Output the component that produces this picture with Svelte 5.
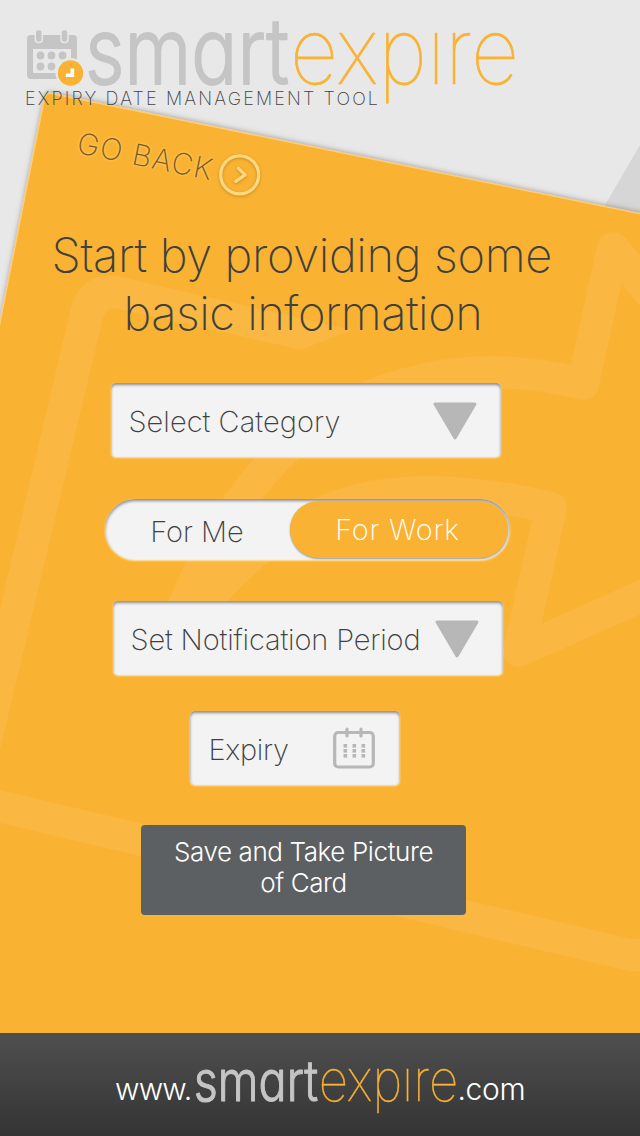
<script>
  let category = $state('Select Category');
  let period = $state('Set Notification Period');
  let audience = $state('work');
  const columns = [14, 23, 32];
  const rows = [17, 22, 27];
</script>

{#snippet wordmark()}
  <svg class="wordmark" viewBox="0 0 430 90" aria-label="smartexpire">
    <text class="smart" x="-2" y="64" textLength="204" lengthAdjust="spacingAndGlyphs">smart</text>
    <text class="expire" x="203" y="64" textLength="229" lengthAdjust="spacingAndGlyphs">expıre</text>
  </svg>
{/snippet}

{#snippet triangle()}
  <svg class="triangle" viewBox="0 0 44 38">
    <path d="M2 2H42L22 36Z" />
  </svg>
{/snippet}

<div class="page">
  <svg class="backdrop" viewBox="0 0 640 1136">
    <defs>
      <filter id="lift" x="-10%" y="-10%" width="120%" height="120%">
        <feDropShadow dx="0" dy="-1" stdDeviation="2.500" flood-color="#666" flood-opacity=".5" />
      </filter>
    </defs>
    <path d="M640 145L590 231L640 240Z" fill="#d6d6d6" />
    <path class="sheet" d="M-60 625L44.200 99Q45.500 92.500 51.500 93.500L700 226V1100H-60Z" filter="url(#lift)" />
    <g class="pattern">
      <path d="M352 330Q325 340 302 350L117 308.500Q107 307 103 318L0 750V609L72 303Q84 272 117 276Z" />
      <path d="M0 790L8 792L630 938.500Q636 940 640 938V971Q634 972 629 971L0 823Z" />
      <path class="line" d="M178 620C205 550 240 490 290 445C350 395 450 350 583 384L613 248L660 305" />
      <path class="line" d="M195 615C250 545 320 490 433 492C480 493 515 499 551 508L519 651L660 588" />
    </g>
  </svg>

  <header>
    <div class="brand">
      <svg class="mark" viewBox="0 0 58 58">
        <rect x="2" y="5" width="50" height="44" rx="4" fill="#c5c5c5" />
        <path d="M8 19H46V43H8Z" fill="#e8e8e8" />
        <g fill="#c5c5c5">
          <circle cx="15.500" cy="25.500" r="3.900" /><circle cx="26.500" cy="25.500" r="3.900" /><circle cx="37.500" cy="25.500" r="3.900" />
          <circle cx="15.500" cy="36.500" r="3.900" /><circle cx="26.500" cy="36.500" r="3.900" />
        </g>
        <g fill="#c5c5c5" stroke="#e8e8e8" stroke-width="1.500">
          <rect x="10.300" y="-.5" width="7" height="13" rx="3" /><rect x="36" y="-.5" width="7" height="13" rx="3" />
        </g>
        <circle cx="45.500" cy="43" r="15" fill="#e8e8e8" />
        <circle cx="45.500" cy="43" r="12.700" fill="#f9b233" />
        <path d="M45.500 38.500H49.200V47H40.800V43.500H45.500Z" fill="#fff" />
      </svg>
      {@render wordmark()}
    </div>
    <p class="tagline">EXPIRY DATE MANAGEMENT TOOL</p>
  </header>

  <button class="back">
    <span>GO BACK</span>
    <svg viewBox="0 0 44 44">
      <circle cx="22" cy="22" r="19" />
      <path d="M20.700 15.500L27.500 22L18 28.500" />
    </svg>
  </button>

  <main>
    <h1><span>Start by providing some</span><span class="second">basic information</span></h1>

    <button class="field category"><span>{category}</span>{@render triangle()}</button>

    <div class="switch">
      <button class:active={audience === 'me'} onclick={() => (audience = 'me')}>For Me</button>
      <button class:active={audience === 'work'} onclick={() => (audience = 'work')}>For Work</button>
    </div>

    <button class="field period"><span>{period}</span>{@render triangle()}</button>

    <button class="field expiry">
      <span>Expiry</span>
      <svg class="calendar" viewBox="0 0 42 42">
        <rect x="1.700" y="5.500" width="38.600" height="34.500" rx="3.500" />
        <path d="M14 2V9M28 2V9" />
        {#each rows as y}
          {#each columns as x}
            <rect class="day" x={x - 3.5} {y} width="3.600" height="3.600" />
          {/each}
        {/each}
      </svg>
    </button>

    <button class="save"><span>Save and Take Picture</span><span>of Card</span></button>
  </main>

  <footer>
    <span class="www">www.</span>
    {@render wordmark()}
    <span class="com">.com</span>
  </footer>
</div>

<style>
  :global(body) { margin: 0; }
  .page {
    position: relative;
    isolation: isolate;
    width: 640px;
    height: 1136px;
    overflow: hidden;
    display: flex;
    flex-direction: column;
    background: #e8e8e8;
    color: #404040;
    font-family: Inter, "Liberation Sans", sans-serif;
    font-weight: 150;
  }
  .backdrop { position: absolute; inset: 0; z-index: -1; width: 640px; height: 1136px; }
  .sheet { fill: #f9b233; stroke: #fccd7c; stroke-width: 1.5; }
  .pattern { fill: #fab741; }
  .line { fill: none; stroke: #fab741; stroke-width: 32; stroke-linejoin: round; }
  button {
    border: 0;
    padding: 0;
    background: none;
    color: inherit;
    font: inherit;
    white-space: nowrap;
  }
  header { height: 108px; padding: 20px 0 0 25px; box-sizing: border-box; }
  .brand { display: flex; height: 69px; }
  .mark { width: 58px; height: 58px; margin-top: 9.5px; overflow: visible; flex: none; }
  .wordmark { width: 430px; height: 90px; margin-left: 4px; overflow: visible; flex: none; }
  .smart { font-size: 92px; font-weight: 300; fill: #c5c5c5; stroke: #c5c5c5; stroke-width: 1.8px; stroke-linejoin: round; font-feature-settings: "cv11"; }
  .expire { font-size: 94px; font-weight: 100; fill: #f9b233; stroke: #f9b233; stroke-width: .7px; }
  .tagline { margin: 0; font-size: 18px; line-height: 20px; letter-spacing: 2.15px; font-weight: 250; white-space: nowrap; }
  .back {
    display: flex;
    align-items: center;
    align-self: flex-start;
    height: 44px;
    margin: 12px 0 0 78px;
    transform: rotate(11.5deg);
    transform-origin: 0 50%;
    color: #80591a;
    font-size: 29.5px;
    letter-spacing: 1.2px;
    font-weight: 250;
    text-shadow: 0 0 3px #ffe09a;
  }
  .back svg { width: 44px; height: 44px; margin-left: 5px; transform: rotate(-11.5deg); fill: none; stroke: #fdd882; stroke-width: 3.2; stroke-linecap: round; stroke-linejoin: round; filter: drop-shadow(0 1px 1.5px #c98a20); }
  main { flex: 1; display: flex; flex-direction: column; align-items: flex-start; }
  h1 { display: flex; flex-direction: column; margin: 62px 0 0 51.5px; padding: 0; font-size: 47px; line-height: 57.5px; font-weight: 150; letter-spacing: -.35px; white-space: nowrap; }
  .second { margin-left: 72px; letter-spacing: -.5px; }
  .field {
    display: flex;
    align-items: center;
    justify-content: space-between;
    box-sizing: border-box;
    height: 74px;
    padding-top: 2px;
    border-radius: 5px;
    background: #f3f3f3;
    box-shadow: inset 0 2px 3px #8b8b95, 0 1px 2px #ffe6b4;
    font-size: 29px;
  }
  .category, .period { width: 390px; padding-right: 24px; padding-left: 18px; }
  .category { margin: 42px 0 0 110.5px; letter-spacing: .05px; }
  .period { margin: 41px 0 0 112.5px; letter-spacing: -.15px; }
  .expiry { width: 210px; margin: 36px 0 0 189.500px; padding: 2px 24.5px 0 19px; letter-spacing: -.3px; }
  .triangle { width: 44px; height: 38px; fill: #b7b7b7; stroke: #b7b7b7; stroke-width: 3; stroke-linejoin: round; }
  .calendar { width: 42px; height: 42px; margin-top: -2px; fill: none; stroke: #b7b7b7; stroke-width: 3.2; stroke-linecap: round; }
  .day { fill: #b7b7b7; stroke: none; }
  .switch {
    display: flex;
    box-sizing: border-box;
    width: 405px;
    height: 61px;
    margin: 42px 0 0 104.5px;
    padding: 2px 2px 2px 0;
    border-radius: 31px;
    background: #f3f3f3;
    box-shadow: inset 0 2px 3px #8b8b95, 0 1px 2px #ffe6b4;
    font-size: 29px;
  }
  .switch button { flex: 0 0 185px; padding-top: 3px; border-radius: 29px; }
  .switch .active { flex: 1; padding: 0 2px 0 0; background: #f9b233; color: #fff; font-weight: 250; letter-spacing: .7px; box-shadow: 0 1px 2px #999; }
  .save {
    display: flex;
    flex-direction: column;
    align-items: center;
    box-sizing: border-box;
    width: 325px;
    height: 90px;
    margin: 40px 0 0 141px;
    padding-top: 11px;
    border-radius: 4px;
    background: #5d6062;
    color: #fff;
    font-size: 26px;
    line-height: 31px;
    letter-spacing: -.4px;
    font-weight: 300;
  }
  footer {
    display: flex;
    height: 103px;
    box-sizing: border-box;
    padding: 28px 0 0 115px;
    background: linear-gradient(#4f4f4f, #343434);
    color: #fff;
    font-size: 30px;
    line-height: 57px;
    font-weight: 300;
  }
  .www { letter-spacing: -.8px; }
  .com { letter-spacing: -.3px; }
  footer .wordmark { width: 262px; height: 55px; margin: 1px 0 0 4px; }
</style>
